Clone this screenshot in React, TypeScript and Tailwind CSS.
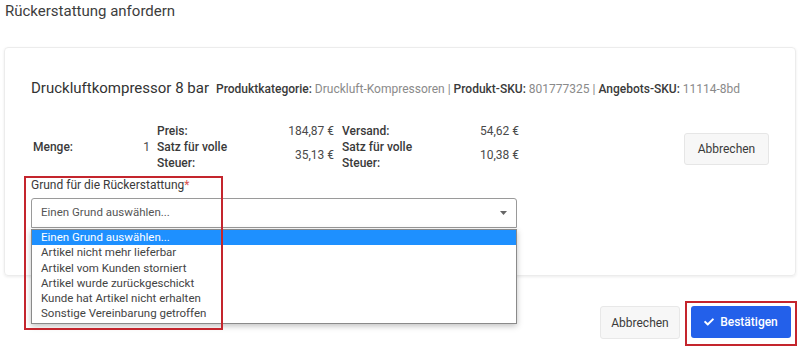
import React from "react";
import { FaCheck } from "react-icons/fa";

const font = { fontFamily: 'Roboto, "Liberation Sans", Arial, sans-serif' };

function PriceBlock({ a, av, bv }: { a: string; av: string; bv: string }) {
  return (
    <div className="grid grid-cols-[86px_91px] text-[12px] leading-[16px]">
      <div className="font-medium text-[#3a3a3a]">{a}</div>
      <div className="text-right text-[#4a4a4a]">{av}</div>
      <div className="font-medium text-[#3a3a3a]">
        Satz für volle
        <br />
        Steuer:
      </div>
      <div className="flex items-center justify-end text-[#4a4a4a]">{bv}</div>
    </div>
  );
}

export default function App() {
  const options = [
    "Einen Grund auswählen...",
    "Artikel nicht mehr lieferbar",
    "Artikel vom Kunden storniert",
    "Artikel wurde zurückgeschickt",
    "Kunde hat Artikel nicht erhalten",
    "Sonstige Vereinbarung getroffen",
  ];
  return (
    <div className="relative h-[352px] w-[800px] overflow-hidden bg-white text-[#333]" style={font}>
      <div className="h-[22px] whitespace-nowrap px-[5px] pt-[1px] text-[15px] leading-[20px] text-[#3d3d3d]">
        Rückerstattung anfordern
      </div>

      <div className="mx-[4px] mt-[25px] h-[229px] rounded-[4px] border border-[#ececec] px-[26px] pt-[30px] shadow-[0_1px_3px_rgba(0,0,0,0.08)]">
        <div className="flex h-[20px] items-baseline gap-[7px] whitespace-nowrap">
          <span className="text-[15px] leading-[20px] text-[#333]">Druckluftkompressor 8 bar</span>
          <span className="text-[12px] text-[#8a8a8a]">
            <span className="font-medium text-[#3a3a3a]">Produktkategorie:</span> Druckluft-Kompressoren |{" "}
            <span className="font-medium text-[#3a3a3a]">Produkt-SKU:</span> 801777325 |{" "}
            <span className="font-medium text-[#3a3a3a]">Angebots-SKU:</span> 11114-8bd
          </span>
        </div>

        <div className="mt-[25px] flex h-[48px] items-center whitespace-nowrap">
          <div className="ml-[2px] flex w-[117px] items-center justify-between text-[12px] font-medium text-[#3a3a3a]">
            <span>Menge:</span>
            <span className="font-normal text-[#4a4a4a]">1</span>
          </div>
          <div className="ml-[7px]">
            <PriceBlock a="Preis:" av="184,87 €" bv="35,13 €" />
          </div>
          <div className="ml-[8px]">
            <PriceBlock a="Versand:" av="54,62 €" bv="10,38 €" />
          </div>
          <button className="ml-[165px] mt-[4px] h-[32px] w-[85px] rounded-[3px] border border-[#e6e6e6] bg-[#f7f7f7] text-[12px] text-[#3a3a3a]">
            Abbrechen
          </button>
        </div>

        <div className="mt-[6px] h-[16px] text-[12px] leading-[16px] text-[#3a3a3a]">
          Grund für die Rückerstattung<span className="text-[#d9534f]">*</span>
        </div>
        <div className="relative mt-[5px] w-[486px]">
          <div className="flex h-[30px] items-center justify-between rounded-t-[3px] border border-[#9a9a9a] pl-[9px] pr-[9px] text-[11.5px] text-[#555]">
            <span>Einen Grund auswählen...</span>
            <svg width="7" height="4" viewBox="0 0 7 4">
              <path d="M0 0h7L3.5 4z" fill="#666" />
            </svg>
          </div>
          <div className="absolute left-0 top-[31px] z-10 w-[486px] border border-[#8a8a8a] bg-white pb-[1px] shadow-[0_2px_6px_rgba(0,0,0,0.25)]">
            {options.map((o, i) => (
              <div
                key={o}
                className={
                  "h-[15.3px] whitespace-nowrap pl-[9px] text-[11.5px] leading-[15.3px] " +
                  (i === 0 ? "bg-[#1e90ff] text-white" : "text-[#444]")
                }
              >
                {o}
              </div>
            ))}
          </div>
        </div>
      </div>

      <div className="mr-[9px] mt-[30px] flex justify-end gap-[11px]">
        <button className="h-[33px] w-[80px] rounded-[3px] border border-[#e8e8e8] bg-[#f7f7f7] text-[12px] text-[#3a3a3a]">
          Abbrechen
        </button>
        <button className="flex h-[32px] w-[100px] items-center justify-center gap-[6px] rounded-[3px] bg-[#2360ea] text-[12px] font-medium text-white">
          <FaCheck className="h-[10px] w-[10px]" />
          Bestätigen
        </button>
      </div>

      <div className="pointer-events-none absolute left-[24px] top-[176px] z-20 h-[154px] w-[199px] border-2 border-[#c4252d]" />
      <div className="pointer-events-none absolute left-[685px] top-[301px] z-20 h-[45px] w-[112px] border-2 border-[#c4252d]" />
    </div>
  );
}
